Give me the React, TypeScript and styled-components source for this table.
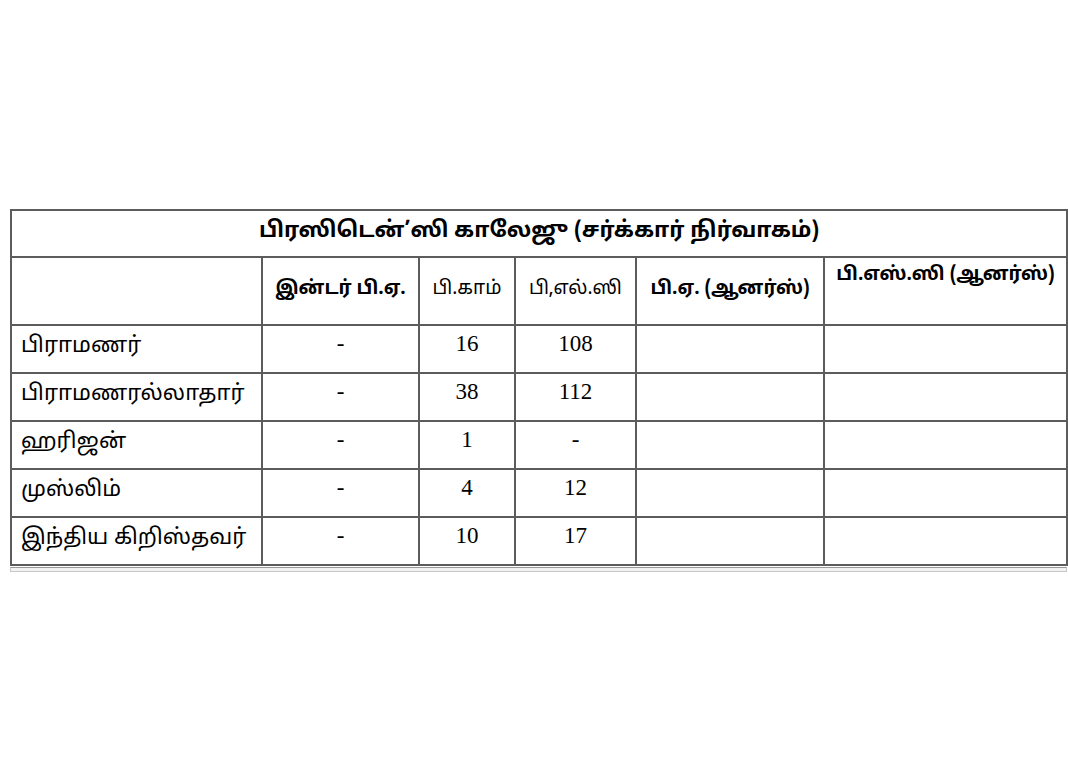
import styled, { createGlobalStyle } from "styled-components";

const GlobalStyle = createGlobalStyle`
  html, body {
    margin: 0;
    padding: 0;
    background: #ffffff;
  }
  body {
    font-family: "Noto Sans Tamil", "Lohit Tamil", "Latha", "Noto Sans", sans-serif;
    color: #000;
  }
`;

const columns = [251, 157, 96, 121, 188, 243];

const headers = [
  { text: "இன்டர் பி.ஏ.", bold: true },
  { text: "பி.காம்", bold: false },
  { text: "பி,எல்.ஸி", bold: false },
  { text: "பி.ஏ. (ஆனர்ஸ்)", bold: true },
  { text: "பி.எஸ்.ஸி (ஆனர்ஸ்)", bold: true },
];

const rows = [
  { label: "பிராமணர்", values: ["-", "16", "108", "", ""] },
  { label: "பிராமணரல்லாதார்", values: ["-", "38", "112", "", ""] },
  { label: "ஹரிஜன்", values: ["-", "1", "-", "", ""] },
  { label: "முஸ்லிம்", values: ["-", "4", "12", "", ""] },
  { label: "இந்திய கிறிஸ்தவர்", values: ["-", "10", "17", "", ""] },
];

export default function App() {
  return (
    <>
      <GlobalStyle />
      <Page>
        <Sheet>
          <Table>
            <colgroup>
              {columns.map((w, i) => (
                <col key={i} style={{ width: w }} />
              ))}
            </colgroup>
            <tbody>
              <TitleRow>
                <TitleCell colSpan={6}>
                  பிரஸிடென்’ஸி காலேஜு (சர்க்கார் நிர்வாகம்)
                </TitleCell>
              </TitleRow>
              <HeadRow>
                <HeadCell />
                {headers.map((h, i) => (
                  <HeadCell
                    key={h.text}
                    $bold={h.bold}
                    $top={i === headers.length - 1}
                  >
                    {h.text}
                  </HeadCell>
                ))}
              </HeadRow>
              {rows.map((r) => (
                <DataRow key={r.label}>
                  <LabelCell>{r.label}</LabelCell>
                  {r.values.map((v, i) => (
                    <NumCell key={i}>{v}</NumCell>
                  ))}
                </DataRow>
              ))}
            </tbody>
          </Table>
          <FootLine />
        </Sheet>
      </Page>
    </>
  );
}

const Page = styled.div`
  padding: 209px 1px 0 10px;
`;

const Sheet = styled.div`
  width: 1057px;
`;

const Table = styled.table`
  width: 1057px;
  table-layout: fixed;
  border-collapse: collapse;
  border-left: 2px solid #111;
  border-right: 2px solid #444;
  border-top: 2px solid #444;
`;

const TitleRow = styled.tr`
  height: 47px;
`;

const HeadRow = styled.tr`
  height: 68px;
`;

const DataRow = styled.tr`
  height: 48px;
`;

const Cell = styled.td`
  border: 2px solid #5c5c5c;
  padding: 0;
  text-align: center;
`;

const TitleCell = styled(Cell)`
  font-weight: 700;
  font-size: 22px;
  vertical-align: middle;
  padding-bottom: 4px;
`;

const HeadCell = styled(Cell)<{ $top?: boolean; $bold?: boolean }>`
  font-weight: ${(p) => (p.$bold ? 700 : 400)};
  font-size: 19px;
  vertical-align: top;
  padding-top: ${(p) => (p.$top ? "5px" : "19px")};
  white-space: nowrap;
`;

const LabelCell = styled(Cell)`
  text-align: left;
  padding-left: 9px;
  font-size: 22px;
  vertical-align: top;
  padding-top: 7px;
  white-space: nowrap;
`;

const NumCell = styled(Cell)`
  font-family: "Liberation Serif", "Times New Roman", serif;
  font-size: 23px;
  vertical-align: top;
  padding-top: 5px;
`;

const FootLine = styled.div`
  height: 3px;
  margin-top: 1px;
  border: 1px solid #c8c8c8;
  border-top-color: #9a9a9a;
  background: #f2f2f2;
`;
